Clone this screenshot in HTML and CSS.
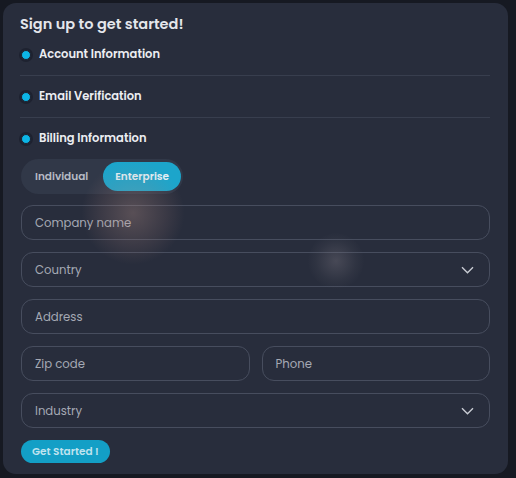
FILE: index.html
```html
<!DOCTYPE html>
<html>
<head>
<meta charset="utf-8">
<link rel="stylesheet" href="styles.css">
</head>
<body>
<div class="card">
  <div class="glow glow-a"></div>
  <div class="glow glow-b"></div>
  <h1 class="title">Sign up to get started!</h1>
  <div class="steps">
    <div class="step"><span class="dot"></span>Account Information</div>
    <div class="step"><span class="dot"></span>Email Verification</div>
    <div class="step"><span class="dot"></span>Billing Information</div>
  </div>
  <div class="toggle">
    <span class="opt">Individual</span>
    <span class="opt active">Enterprise</span>
  </div>
  <div class="form">
    <div class="field">Company name</div>
    <div class="field select">Country
      <svg class="chev" width="13" height="8" viewBox="0 0 13 8"><path d="M1 1.2l5.5 5.5 5.5-5.5" fill="none" stroke="#c9ccd4" stroke-width="1.4"/></svg>
    </div>
    <div class="field">Address</div>
    <div class="row">
      <div class="field">Zip code</div>
      <div class="field">Phone</div>
    </div>
    <div class="field select">Industry
      <svg class="chev" width="13" height="8" viewBox="0 0 13 8"><path d="M1 1.2l5.5 5.5 5.5-5.5" fill="none" stroke="#c9ccd4" stroke-width="1.4"/></svg>
    </div>
  </div>
  <button class="submit">Get Started !</button>
</div>
</body>
</html>
```
FILE: styles.css
```css
* { box-sizing: border-box; }
html, body { margin: 0; padding: 0; }
body {
  background: #161922;
  width: 516px;
  height: 478px;
  font-family: "Poppins", "Inter", "Noto Sans", sans-serif;
  overflow: hidden;
}
.card {
  position: relative;
  margin: 3px 0 0 3px;
  width: 505px;
  height: 471px;
  background: #282d3c;
  border-radius: 13px;
  padding: 11px 18px 0 17px;
}
.glow {
  position: absolute;
  border-radius: 50%;
  pointer-events: none;
}
.glow-a {
  left: 78px; top: 158px; width: 104px; height: 104px;
  background: radial-gradient(circle, rgba(190,150,140,0.32) 0%, rgba(170,130,125,0.14) 45%, rgba(40,45,60,0) 70%);
}
.glow-b {
  left: 305px; top: 230px; width: 56px; height: 56px;
  background: radial-gradient(circle, rgba(130,125,135,0.35) 0%, rgba(100,100,110,0.12) 50%, rgba(40,45,60,0) 72%);
}
.title {
  margin: 0;
  font-size: 14.5px;
  line-height: 20px;
  font-weight: 600;
  color: #e4e6eb;
}
.steps { display: flex; flex-direction: column; }
.step {
  display: flex;
  align-items: center;
  gap: 8px;
  height: 42px;
  border-bottom: 1px solid #383e4e;
  font-size: 11.5px;
  font-weight: 600;
  color: #eceef2;
  padding-left: 1px;
}
.step:last-child { border-bottom: none; height: 41px; }
.dot {
  width: 10px; height: 10px;
  border-radius: 50%;
  background: #0cb5e6;
  box-shadow: 0 0 0 2px #1e2230;
  border: 1px solid #1e2230;
}
.toggle {
  display: inline-flex;
  align-items: center;
  margin-left: 1px;
  height: 35px;
  padding: 3px 2px 3px 3px;
  background: #313848;
  border-radius: 18px;
  gap: 4px;
}
.opt {
  display: flex;
  align-items: center;
  height: 29px;
  padding: 0 11px;
  border-radius: 15px;
  font-size: 10.5px;
  font-weight: 600;
  color: #b7bbc5;
}
.opt.active {
  background: #1ca5cb;
  color: #e3f1f7;
  padding: 0 12px;
}
.form {
  display: flex;
  flex-direction: column;
  gap: 12px;
  margin-top: 11px;
  margin-left: 1px;
}
.row { display: flex; gap: 12px; }
.row .field { flex: 1; }
.field {
  height: 35px;
  border: 1px solid #474d5e;
  border-radius: 12px;
  display: flex;
  align-items: center;
  padding: 1px 15px 0 13px;
  font-size: 11.7px;
  color: #a5a9b4;
}
.select { justify-content: space-between; }
.submit {
  margin-top: 12px;
  margin-left: 1px;
  height: 23px;
  padding: 0 11px;
  border: none;
  border-radius: 12px;
  background: #139fc6;
  color: #bfe3ef;
  font-family: inherit;
  font-size: 10.5px;
  font-weight: 600;
}
```
